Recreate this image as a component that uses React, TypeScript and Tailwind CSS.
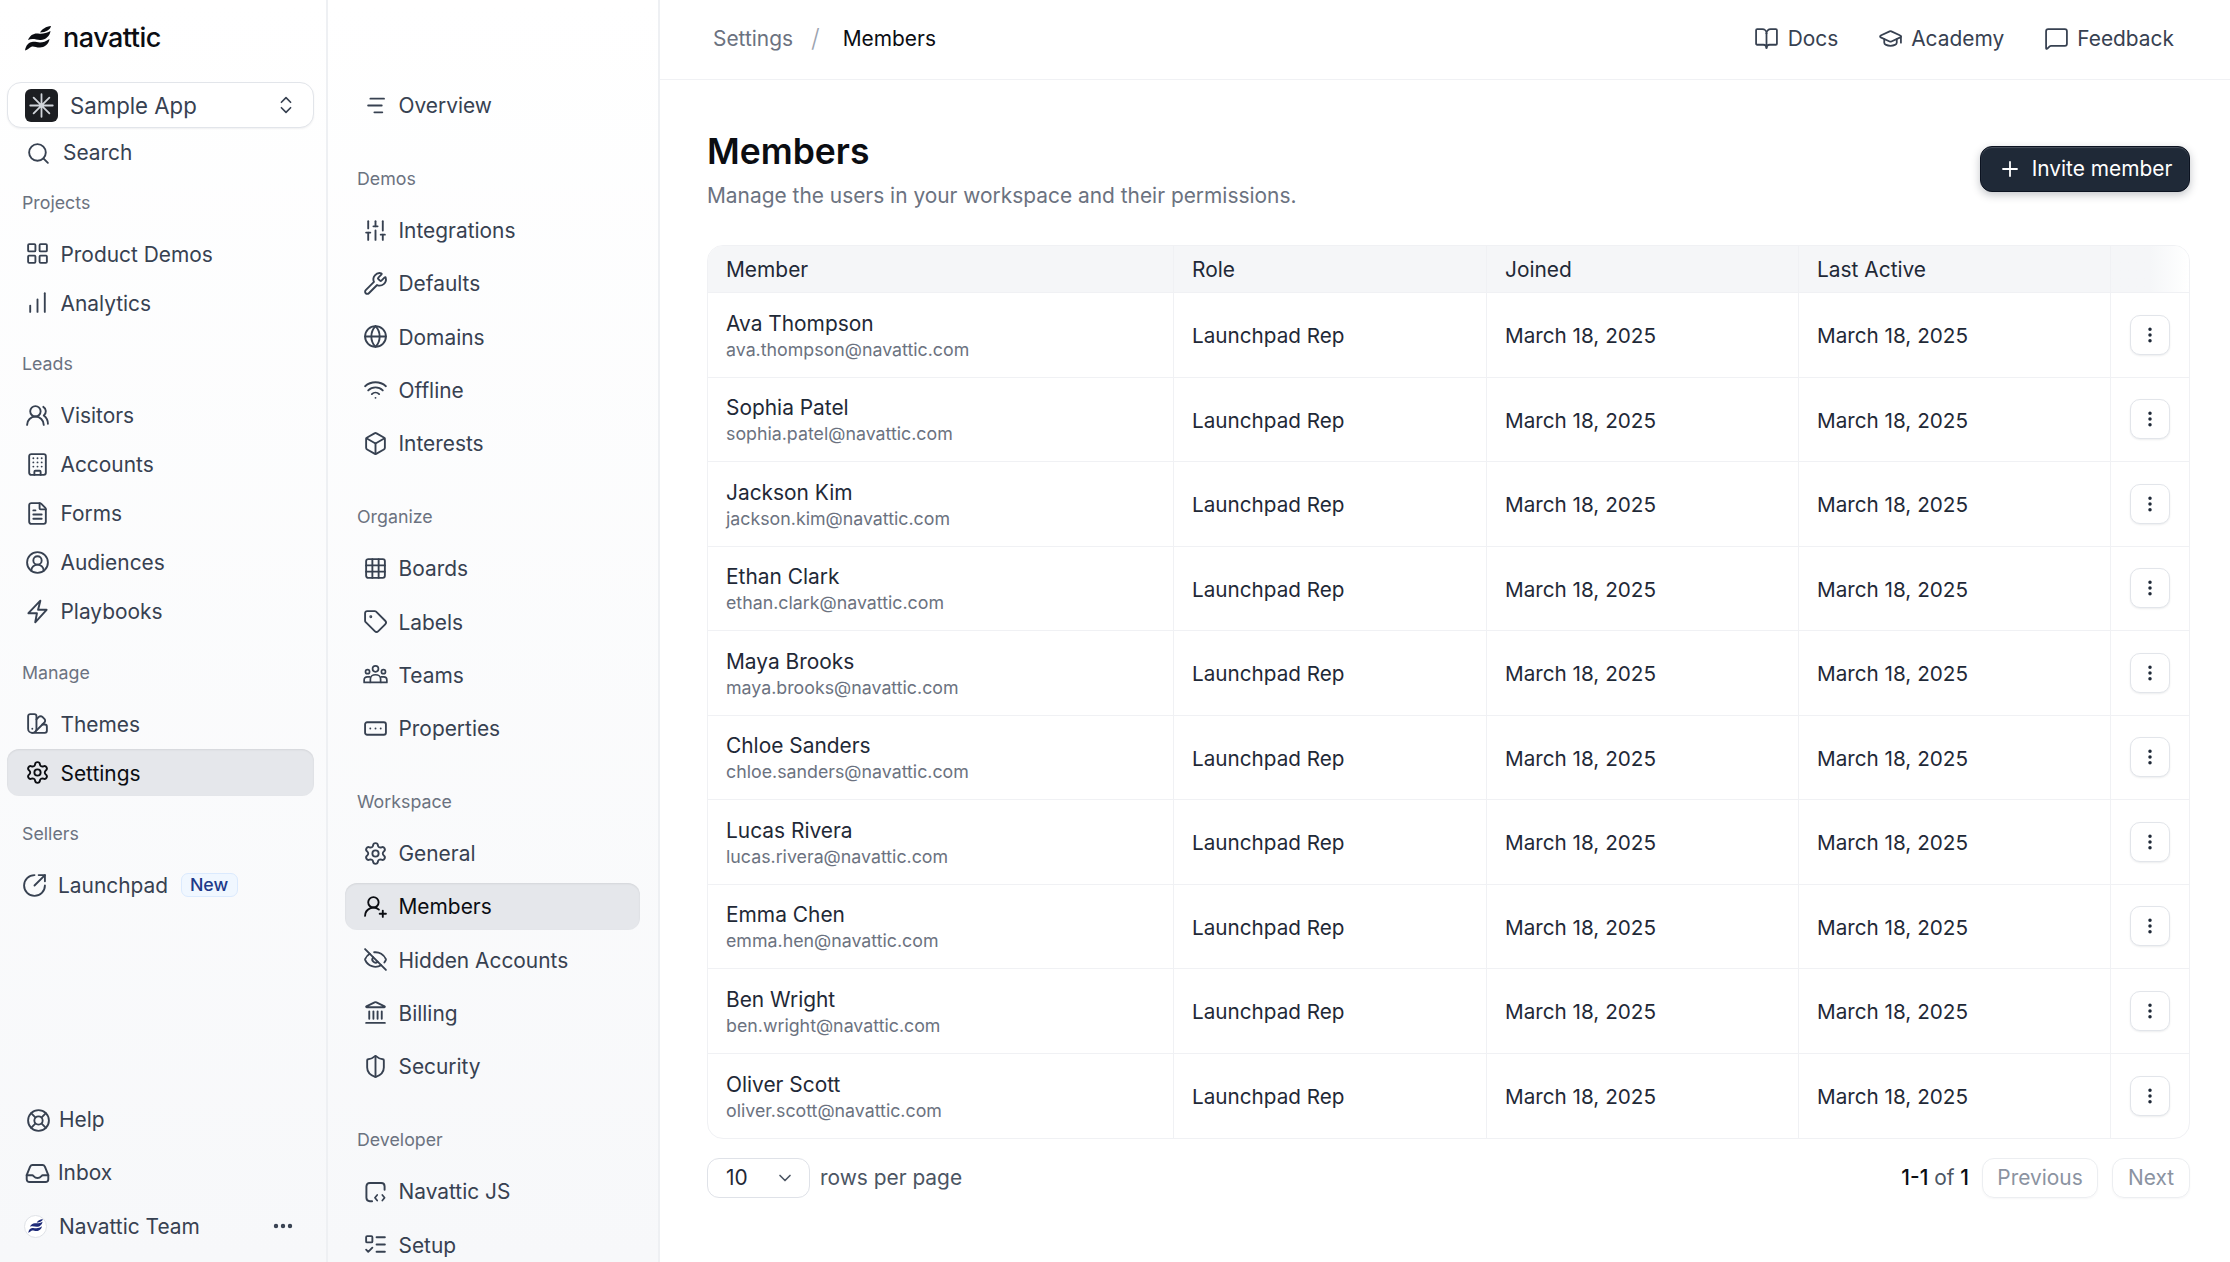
import {
  BookOpen,
  ChartNoAxesColumnIncreasing,
  ChevronDown,
  ChevronsUpDown,
  CircleArrowOutUpRight,
  CircleUserRound,
  Building,
  EllipsisVertical,
  Ellipsis,
  EyeOff,
  FileText,
  Globe,
  GraduationCap,
  Box,
  Grid3x3,
  Landmark,
  LayoutGrid,
  LifeBuoy,
  ListTodo,
  MessageSquare,
  Plus,
  RectangleEllipsis,
  Search,
  Settings,
  ShieldHalf,
  SlidersVertical,
  SwatchBook,
  Tag,
  UserRoundPlus,
  UsersRound,
  Wifi,
  Wrench,
} from "lucide-react"
import type { ReactNode } from "react"

const iconClass = "size-[25px] shrink-0"

function LogoMark({ className, color }: { className: string; color: string }) {
  return (
    <svg viewBox="0 0 26 25" className={className} fill={color}>
      <path d="M15 6.500C17 3 21 0.500 26 0C25.500 3.500 21 6.500 15 6.500z" />
      <path d="M3 14C5 9 9 7 13 7.500C17 8 21 7.500 25.500 5C25 10 20 14.500 15 14C11 13.500 7 12 3 14z" />
      <path d="M0 24.500C1 19 3.500 16.500 7 16C10 15.500 12 16.500 15 16.500C18 16.500 21 15.500 24.500 13C24 18 19 21.500 15 21.500C11 21.500 9 20 7 20.500C4 21.500 3 24 0 24.500z" />
    </svg>
  )
}

function AppIcon() {
  return (
    <div className="flex size-[33px] shrink-0 items-center justify-center rounded-[6px] bg-[#1c1e22]">
      <svg viewBox="0 0 24 24" className="size-[27px]" stroke="#d1d5db" strokeWidth="1.6" strokeLinecap="round">
        <path d="M12 2v20M2 12h20M5 5l14 14M19 5L5 19" />
      </svg>
    </div>
  )
}

function OverviewIcon() {
  return (
    <svg viewBox="0 0 22 22" className={iconClass} fill="none" stroke="#374151" strokeWidth="1.6" strokeLinecap="round">
      <path d="M6.500 5h12M4.500 11h12M10 17h7" />
    </svg>
  )
}

function BoltIcon() {
  return (
    <svg viewBox="0 0 22 22" className={iconClass} fill="none" stroke="#374151" strokeWidth="1.700" strokeLinejoin="round" strokeLinecap="round">
      <path d="M13.500 1.500L3 12.500h7.500L9 20.500l10-11h-7.500z" />
    </svg>
  )
}

function InboxIcon() {
  return (
    <svg viewBox="0 0 22 22" className={iconClass} fill="none" stroke="#374151" strokeWidth="1.700" strokeLinejoin="round" strokeLinecap="round">
      <path d="M1.500 12.500L4.500 5c.4-.8 1-1.500 2-1.500h9c1 0 1.600.7 2 1.500l3 7.500V16c0 1.500-1 2.500-2.500 2.500H4C2.500 18.500 1.500 17.500 1.500 16z" />
      <path d="M1.500 12.500h5c1 0 1.500 2.500 4.500 2.500s3.500-2.500 4.500-2.500h5" />
    </svg>
  )
}

function TeamsIcon() {
  return (
    <svg viewBox="0 0 22 22" className={iconClass} fill="none" stroke="#374151" strokeWidth="1.500" strokeLinejoin="round">
      <circle cx="11" cy="6" r="2.600" />
      <circle cx="4" cy="8.500" r="1.800" />
      <circle cx="18" cy="8.500" r="1.800" />
      <path d="M6.500 18v-3c0-2.200 2-3.800 4.500-3.800s4.500 1.600 4.500 3.800v3z" />
      <path d="M6.500 13H3.800C2.200 13 1 14.200 1 15.800V18h5.500M15.500 13h2.700c1.600 0 2.800 1.200 2.800 2.800V18h-5.500" />
    </svg>
  )
}

function ScriptIcon() {
  return (
    <svg viewBox="0 0 22 22" className={iconClass} fill="none" stroke="#374151" strokeWidth="1.700" strokeLinejoin="round" strokeLinecap="round">
      <path d="M8 19.500H6c-2 0-3-1-3-3v-10c0-2 1-3 3-3h10c2 0 3 1 3 3v3" />
      <path d="M12.500 14l-2 2.500 2 2.500M17 14l2 2.500-2 2.500" strokeWidth="1.500" />
    </svg>
  )
}

function SectionLabel({ children, first }: { children: string; first?: boolean }) {
  return (
    <div
      className={`mb-[14px] flex h-[26px] items-center text-[17.800px] text-[#6b7280] ${first ? "mt-[13.500px]" : "mt-[25.500px]"}`}
    >
      {children}
    </div>
  )
}

function NavItem({ icon, label, active }: { icon: ReactNode; label: string; active?: boolean }) {
  return (
    <div
      className={`flex h-[47px] items-center gap-[11px] rounded-[12px] pl-[17.500px] text-[20.900px] ${
        active ? "bg-[#e5e7eb] text-[#0b0d12] shadow-[inset_0_1px_2px_rgba(0,0,0,0.08)]" : "text-[#374151]"
      }`}
    >
      {icon}
      <span className="truncate pt-[1.500px]">{label}</span>
    </div>
  )
}

function MainSidebar() {
  return (
    <aside className="flex h-full w-[328px] shrink-0 flex-col border-r-2 border-[#eef0f3] bg-gradient-to-b from-white to-[#f7f8fa] pl-[7px] pr-[12px]">
      <div className="flex h-[76px] shrink-0 items-center gap-[12px] pl-[18px]">
        <LogoMark className="h-[25px] w-[26px]" color="#0b0d12" />
        <span className="text-[27px] font-medium tracking-[-0.5px] text-[#0b0d12]">navattic</span>
      </div>
      <div className="mt-[6px] flex h-[46px] shrink-0 items-center gap-[12px] rounded-[14px] border border-[#e2e5ea] bg-white pl-[17px] pr-[16px] text-[22.200px] text-[#374151] shadow-[0_1px_2px_rgba(16,24,40,0.06)]">
        <AppIcon />
        <span className="flex-1 pt-[2px]">Sample App</span>
        <ChevronsUpDown className="size-[22px] text-[#374151]" strokeWidth={1.8} />
      </div>
      <div className="mt-[1.500px] flex h-[47px] shrink-0 items-center gap-[12.500px] pl-[18.500px] text-[20.900px] text-[#374151]">
        <Search className={iconClass} strokeWidth={1.8} />
        <span>Search</span>
      </div>

      <div className="pl-[15px]">
        <SectionLabel first>Projects</SectionLabel>
      </div>
      <div className="flex flex-col gap-[2px]">
        <NavItem icon={<LayoutGrid className={iconClass} strokeWidth={1.8} />} label="Product Demos" />
        <NavItem icon={<ChartNoAxesColumnIncreasing className={iconClass} strokeWidth={1.8} />} label="Analytics" />
      </div>

      <div className="pl-[15px]">
        <SectionLabel>Leads</SectionLabel>
      </div>
      <div className="flex flex-col gap-[2px]">
        <NavItem icon={<UsersRound className={iconClass} strokeWidth={1.8} />} label="Visitors" />
        <NavItem icon={<Building className={iconClass} strokeWidth={1.8} />} label="Accounts" />
        <NavItem icon={<FileText className={iconClass} strokeWidth={1.8} />} label="Forms" />
        <NavItem icon={<CircleUserRound className={iconClass} strokeWidth={1.8} />} label="Audiences" />
        <NavItem icon={<BoltIcon />} label="Playbooks" />
      </div>

      <div className="pl-[15px]">
        <SectionLabel>Manage</SectionLabel>
      </div>
      <div className="flex flex-col gap-[2px]">
        <NavItem icon={<SwatchBook className={iconClass} strokeWidth={1.8} />} label="Themes" />
        <NavItem icon={<Settings className={iconClass} strokeWidth={1.8} />} label="Settings" active />
      </div>

      <div className="pl-[15px]">
        <SectionLabel>Sellers</SectionLabel>
      </div>
      <div className="flex h-[47px] items-center gap-[11.500px] pl-[14.500px] text-[20.900px] text-[#374151]">
        <CircleArrowOutUpRight className={iconClass} strokeWidth={1.8} />
        <span className="pt-[1.500px]">Launchpad</span>
        <span className="ml-[1px] flex h-[24px] w-[57px] items-center justify-center rounded-[7px] border border-[#dbeafe] bg-[#f0f7ff] text-[17.800px] font-medium text-[#1e3a8a]">
          New
        </span>
      </div>

      <div className="mt-auto flex flex-col gap-[6px] pb-[12.500px] text-[20.900px] text-[#374151]">
        <div className="flex h-[47px] items-center gap-[8.500px] pl-[18.500px]">
          <LifeBuoy className={iconClass} strokeWidth={1.8} />
          <span>Help</span>
        </div>
        <div className="flex h-[47px] items-center gap-[8.500px] pl-[17.500px]">
          <InboxIcon />
          <span>Inbox</span>
        </div>
        <div className="flex h-[47px] items-center pl-[17px] pr-[19px]">
          <div className="flex size-[23px] items-center justify-center rounded-full border border-[#dfe2e7] bg-white">
            <LogoMark className="h-[14px] w-[15px]" color="#1e2a78" />
          </div>
          <span className="ml-[12px] flex-1 pt-[1.500px]">Navattic Team</span>
          <Ellipsis className="size-[24px] text-[#374151]" strokeWidth={2.4} />
        </div>
      </div>
    </aside>
  )
}

function SubGroup({ label, children }: { label: string; children: ReactNode }) {
  return (
    <div>
      <div className="mb-[14.500px] mt-[37.500px] flex h-[26px] items-center pl-[12px] text-[17.800px] text-[#6b7280]">{label}</div>
      <div className="flex flex-col gap-[6.300px]">{children}</div>
    </div>
  )
}

function SettingsSidebar() {
  return (
    <aside className="h-full w-[332px] shrink-0 overflow-hidden border-r-2 border-[#eef0f3] bg-gradient-to-b from-white to-[#f7f8fa] pl-[17px] pr-[18px] pt-[81.500px]">
      <NavItem icon={<OverviewIcon />} label="Overview" />
      <SubGroup label="Demos">
        <NavItem icon={<SlidersVertical className={iconClass} strokeWidth={1.8} />} label="Integrations" />
        <NavItem icon={<Wrench className={iconClass} strokeWidth={1.8} />} label="Defaults" />
        <NavItem icon={<Globe className={iconClass} strokeWidth={1.8} />} label="Domains" />
        <NavItem icon={<Wifi className={iconClass} strokeWidth={1.8} />} label="Offline" />
        <NavItem icon={<Box className={iconClass} strokeWidth={1.8} />} label="Interests" />
      </SubGroup>
      <SubGroup label="Organize">
        <NavItem icon={<Grid3x3 className={iconClass} strokeWidth={1.8} />} label="Boards" />
        <NavItem icon={<Tag className={iconClass} strokeWidth={1.8} />} label="Labels" />
        <NavItem icon={<TeamsIcon />} label="Teams" />
        <NavItem icon={<RectangleEllipsis className={iconClass} strokeWidth={1.8} />} label="Properties" />
      </SubGroup>
      <SubGroup label="Workspace">
        <NavItem icon={<Settings className={iconClass} strokeWidth={1.8} />} label="General" />
        <NavItem icon={<UserRoundPlus className={iconClass} strokeWidth={1.8} />} label="Members" active />
        <NavItem icon={<EyeOff className={iconClass} strokeWidth={1.8} />} label="Hidden Accounts" />
        <NavItem icon={<Landmark className={iconClass} strokeWidth={1.8} />} label="Billing" />
        <NavItem icon={<ShieldHalf className={iconClass} strokeWidth={1.8} />} label="Security" />
      </SubGroup>
      <SubGroup label="Developer">
        <NavItem icon={<ScriptIcon />} label="Navattic JS" />
        <NavItem icon={<ListTodo className={iconClass} strokeWidth={1.8} />} label="Setup" />
      </SubGroup>
    </aside>
  )
}

const members = [
  ["Ava Thompson", "ava.thompson@navattic.com"],
  ["Sophia Patel", "sophia.patel@navattic.com"],
  ["Jackson Kim", "jackson.kim@navattic.com"],
  ["Ethan Clark", "ethan.clark@navattic.com"],
  ["Maya Brooks", "maya.brooks@navattic.com"],
  ["Chloe Sanders", "chloe.sanders@navattic.com"],
  ["Lucas Rivera", "lucas.rivera@navattic.com"],
  ["Emma Chen", "emma.hen@navattic.com"],
  ["Ben Wright", "ben.wright@navattic.com"],
  ["Oliver Scott", "oliver.scott@navattic.com"],
]

const rowGrid = "grid grid-cols-[466px_313px_312px_312px_1fr]"
const cellClass = "flex items-center border-r border-[#f0f1f4] pl-[18px] pr-[18px] pt-[2px]"

function MembersTable() {
  return (
    <div className="mt-[34px] overflow-hidden rounded-[16px] border border-[#f0f1f4]">
      <div className={`${rowGrid} h-[47px] border-b border-[#f0f1f4] bg-[#f5f6f8] text-[20.900px] text-[#1f2937]`}>
        <div className={cellClass}>Member</div>
        <div className={cellClass}>Role</div>
        <div className={cellClass}>Joined</div>
        <div className={cellClass}>Last Active</div>
        <div className="bg-gradient-to-r from-[#f5f6f8] from-50% to-white" />
      </div>
      {members.map(([name, email], i) => (
        <div
          key={email}
          className={`${rowGrid} h-[84.500px] text-[20.700px] text-[#1f2937] ${i < members.length - 1 ? "border-b border-[#f0f1f4]" : ""}`}
        >
          <div className={`${cellClass} flex-col !items-start justify-center`}>
            <span className="text-[20.900px] leading-[28px] text-[#1f2937]">{name}</span>
            <span className="text-[17.800px] leading-[24px] text-[#6b7280]">{email}</span>
          </div>
          <div className={cellClass}>Launchpad Rep</div>
          <div className={cellClass}>March 18, 2025</div>
          <div className={cellClass}>March 18, 2025</div>
          <div className="flex items-center justify-center">
            <button className="flex size-[40px] items-center justify-center rounded-[10px] border border-[#e2e5ea] bg-white shadow-[0_1px_2px_rgba(16,24,40,0.08)]">
              <EllipsisVertical className="size-[20px] text-[#1f2937]" strokeWidth={2.2} />
            </button>
          </div>
        </div>
      ))}
    </div>
  )
}

export default function App() {
  return (
    <div className="flex h-[1262px] w-[2230px] overflow-hidden bg-white font-[family-name:Inter,sans-serif]">
      <MainSidebar />
      <SettingsSidebar />
      <main className="flex min-w-0 flex-1 flex-col">
        <header className="flex h-[80px] shrink-0 items-center border-b border-[#f0f1f4] pb-[2px] pl-[53px] pr-[56px] text-[20.900px]">
          <span className="text-[#6b7280]">Settings</span>
          <span className="ml-[18px] mr-[23px] text-[25px] font-light text-[#9ca3af]">/</span>
          <span className="text-[#0b0d12]">Members</span>
          <div className="ml-auto flex items-center gap-[39.500px] text-[#374151]">
            <div className="flex items-center gap-[8.500px]">
              <BookOpen className={iconClass} strokeWidth={1.7} />
              Docs
            </div>
            <div className="flex items-center gap-[8.500px]">
              <GraduationCap className={iconClass} strokeWidth={1.7} />
              Academy
            </div>
            <div className="flex items-center gap-[8.500px]">
              <MessageSquare className={iconClass} strokeWidth={1.7} />
              Feedback
            </div>
          </div>
        </header>
        <div className="flex-1 pl-[47px] pr-[40px] pt-[49px]">
          <div className="flex items-start justify-between">
            <div>
              <h1 className="text-[35.500px] font-semibold leading-[46px] text-[#0b0d12]">Members</h1>
              <p className="mt-[6px] text-[20.900px] leading-[30px] text-[#6b7280]">
                Manage the users in your workspace and their permissions.
              </p>
            </div>
            <button className="mt-[17px] flex h-[46px] w-[210px] items-center justify-center gap-[10px] rounded-[12px] border border-[#0b1220] bg-[#1f2937] text-[20.900px] text-white shadow-[inset_0_1px_1px_rgba(255,255,255,0.18),0_3px_8px_rgba(17,24,39,0.25)]">
              <Plus className="size-[24px]" strokeWidth={1.8} />
              Invite member
            </button>
          </div>
          <MembersTable />
          <div className="mt-[18.500px] flex items-center text-[20.900px]">
            <div className="flex h-[40px] w-[103px] items-center justify-between rounded-[12px] border border-[#dfe2e8] pl-[18px] pr-[14px] text-[#1f2937]">
              10
              <ChevronDown className="size-[20px] text-[#4b5563]" strokeWidth={2} />
            </div>
            <span className="ml-[10px] text-[#4b5563]">rows per page</span>
            <span className="ml-auto mr-[13px] text-[#4b5563]">
              <span className="font-medium text-[#0b0d12]">1-1</span> of <span className="font-medium text-[#0b0d12]">1</span>
            </span>
            <div className="flex h-[40px] w-[116px] items-center justify-center rounded-[12px] border border-[#eceef1] text-[#8b93a1] shadow-[0_1px_2px_rgba(16,24,40,0.04)]">
              Previous
            </div>
            <div className="ml-[14px] flex h-[40px] w-[78px] items-center justify-center rounded-[12px] border border-[#eceef1] text-[#8b93a1] shadow-[0_1px_2px_rgba(16,24,40,0.04)]">
              Next
            </div>
          </div>
        </div>
      </main>
    </div>
  )
}
